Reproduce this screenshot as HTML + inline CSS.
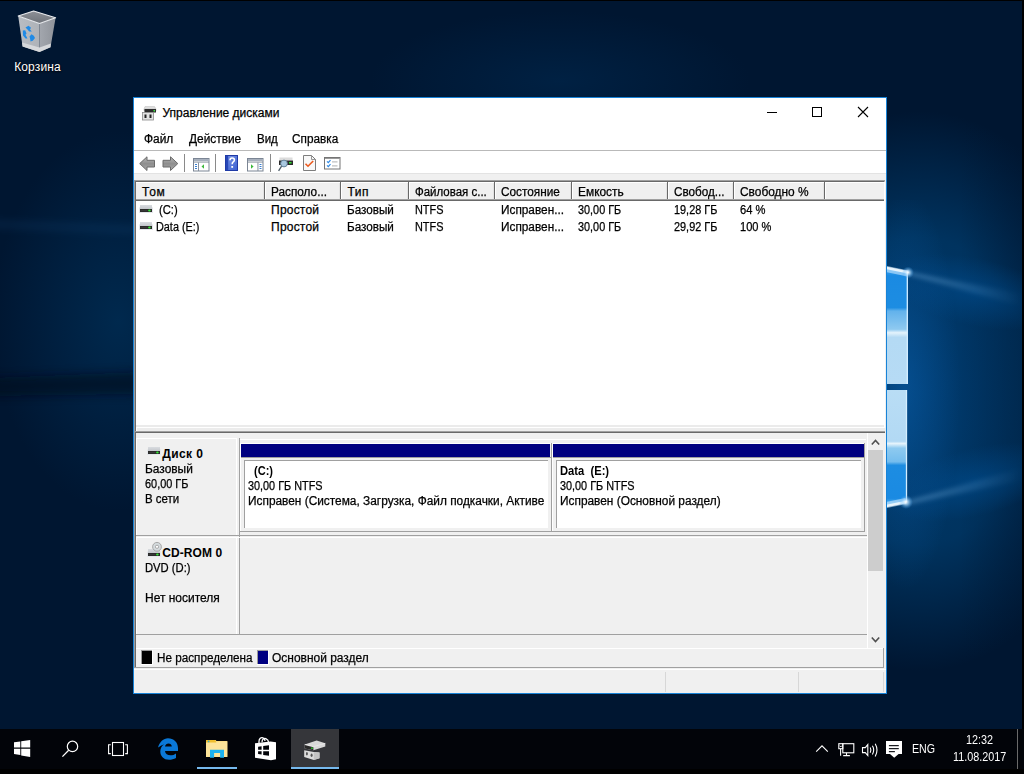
<!DOCTYPE html>
<html><head><meta charset="utf-8">
<style>
*{margin:0;padding:0;box-sizing:border-box}
html,body{width:1024px;height:774px;overflow:hidden;background:#000}
body{position:relative;font-family:"Liberation Sans",sans-serif;font-size:11.5px;color:#000}
.a{position:absolute}
svg.a{overflow:visible}
.t{position:absolute;white-space:nowrap;line-height:16px;font-size:11.5px;-webkit-text-stroke:0.25px currentColor}
#desk{position:absolute;left:0;top:1px;width:1022px;height:728px;overflow:hidden;
 background:
  linear-gradient(90deg, rgba(0,22,49,0) 0px, rgba(0,22,49,0) 960px, rgba(0,22,49,.35) 1022px),
  radial-gradient(ellipse 190px 70px at 560px 80px, rgba(0,34,69,.9), rgba(0,34,69,0) 100%),
  radial-gradient(ellipse 125px 190px at 118px 320px, #00294e 0%, rgba(0,38,74,.6) 50%, rgba(0,34,66,0) 100%),
  radial-gradient(ellipse 200px 280px at 920px 390px, #003a6e 0%, #00335f 55%, rgba(0,40,80,0) 100%),
  #001631;
}
#taskbar{position:absolute;left:0;top:729px;width:1024px;height:45px;background:#020308}
</style></head><body>
<div id="desk"></div>
<svg class="a" style="left:0;top:150px" width="134" height="300" viewBox="0 150 134 300">
 <filter id="bl2" x="-20%" y="-100%" width="140%" height="300%"><feGaussianBlur stdDeviation="5"/></filter>
 <path d="M-10 378L140 372L140 394L-10 396z" fill="#000c1c" opacity=".6" filter="url(#bl2)"/>
 <path d="M-10 222L140 228L140 232L-10 226z" fill="#2a70b0" opacity=".25" filter="url(#bl2)"/>
</svg>
<svg class="a" style="left:860px;top:200px" width="162" height="400" viewBox="860 200 162 400">
 <defs>
  <linearGradient id="p1" x1="0" y1="270" x2="0" y2="384" gradientUnits="userSpaceOnUse">
   <stop offset="0" stop-color="#3aa2f0"/><stop offset=".05" stop-color="#1a8ae2"/><stop offset=".33" stop-color="#1d8de2"/>
   <stop offset=".36" stop-color="#62b2ec"/><stop offset=".52" stop-color="#8ec9f0"/><stop offset=".55" stop-color="#e4f3fc"/><stop offset=".59" stop-color="#b4daf4"/><stop offset="1" stop-color="#b6dbf5"/>
  </linearGradient>
  <linearGradient id="p2" x1="0" y1="390" x2="0" y2="504" gradientUnits="userSpaceOnUse">
   <stop offset="0" stop-color="#b9ddf5"/><stop offset=".45" stop-color="#b2d9f4"/><stop offset=".47" stop-color="#e6f4fc"/><stop offset=".51" stop-color="#8ecaf0"/>
   <stop offset=".63" stop-color="#74bdee"/><stop offset=".66" stop-color="#1d8de2"/><stop offset=".95" stop-color="#1a8ae2"/><stop offset="1" stop-color="#5ab4f2"/>
  </linearGradient>
  <radialGradient id="glow" cx="0" cy="0" r="1" gradientUnits="userSpaceOnUse" gradientTransform="translate(905 390) scale(55 200)">
   <stop offset="0" stop-color="#0a62b0" stop-opacity=".5"/><stop offset="1" stop-color="#0a62b0" stop-opacity="0"/>
  </radialGradient>
  <radialGradient id="spark" cx=".5" cy=".5" r=".5">
   <stop offset="0" stop-color="#fff" stop-opacity="1"/><stop offset=".35" stop-color="#bfe4ff" stop-opacity=".7"/><stop offset="1" stop-color="#3a9ef0" stop-opacity="0"/>
  </radialGradient>
  <linearGradient id="beam" x1="0" y1="0" x2="1" y2="0">
   <stop offset="0" stop-color="#9fd4ff" stop-opacity=".3"/><stop offset="1" stop-color="#9fd4ff" stop-opacity="0"/>
  </linearGradient>
 </defs>
 <rect x="860" y="200" width="162" height="400" fill="url(#glow)"/>
 <radialGradient id="fan1" cx="0" cy="0" r="1" gradientUnits="userSpaceOnUse" gradientTransform="translate(975 292) rotate(12) scale(90 34)">
  <stop offset="0" stop-color="#0056a0" stop-opacity=".45"/><stop offset="1" stop-color="#0056a0" stop-opacity="0"/>
 </radialGradient>
 <radialGradient id="fan2" cx="0" cy="0" r="1" gradientUnits="userSpaceOnUse" gradientTransform="translate(975 482) rotate(-14) scale(90 34)">
  <stop offset="0" stop-color="#0056a0" stop-opacity=".45"/><stop offset="1" stop-color="#0056a0" stop-opacity="0"/>
 </radialGradient>
 <rect x="860" y="200" width="162" height="400" fill="url(#fan1)"/>
 <rect x="860" y="200" width="162" height="400" fill="url(#fan2)"/>
 <filter id="bl" x="-10%" y="-50%" width="120%" height="200%"><feGaussianBlur stdDeviation="2.2"/></filter>
 <path d="M908 271.5L1022 294L1022 306L908 275z" fill="url(#beam)" filter="url(#bl)"/>
 <path d="M906 501L1022 468L1022 480L906 505z" fill="url(#beam)" filter="url(#bl)"/>
 <path d="M860 262L908 272.3V384H860z" fill="url(#p1)"/>
 <path d="M860 390H907V502L860 512z" fill="url(#p2)"/>
 <path d="M860 263.5L908 273.5" stroke="#d8eeff" stroke-width="6" opacity=".55"/>
 <path d="M860 510.5L906 501" stroke="#d8eeff" stroke-width="6" opacity=".55"/>
 <path d="M860 262.5L908 272.3" stroke="#f2faff" stroke-width="2.5" opacity=".9"/>
 <path d="M860 511.5L906 502" stroke="#f2faff" stroke-width="2.5" opacity=".9"/>
 <path d="M907.3 273V384M906.5 390V502" stroke="#d4eeff" stroke-width="1.3"/>
 <circle cx="908" cy="272.5" r="6" fill="url(#spark)"/>
 <circle cx="906" cy="502" r="7" fill="url(#spark)"/>
</svg>
<svg class="a" style="left:0px;top:0px" width="80" height="60" viewBox="0 0 80 60">
 <defs>
  <linearGradient id="rbL" x1="0" y1="0" x2="1" y2="0"><stop offset="0" stop-color="#b9bdc3"/><stop offset="1" stop-color="#aeb2b8"/></linearGradient>
  <linearGradient id="rbR" x1="0" y1="0" x2="1" y2="0"><stop offset="0" stop-color="#a3a7ae"/><stop offset="1" stop-color="#8f939a"/></linearGradient>
  <linearGradient id="rbT" x1="0" y1="0" x2="0" y2="1"><stop offset="0" stop-color="#8d9097"/><stop offset="1" stop-color="#6f737a"/></linearGradient>
 </defs>
 <path d="M18.2 16L39.5 23.4L39.5 52L22.6 46.6z" fill="url(#rbL)"/>
 <path d="M39.5 23.4L55.6 17.8L50.5 47.2L39.5 52z" fill="url(#rbR)"/>
 <path d="M18.2 16L33.6 11L55.6 17.8L39.5 23.4z" fill="url(#rbT)" stroke="#e9ebee" stroke-width="1.1" stroke-linejoin="round"/>
 <path d="M22 42.5L39.5 47.5L50.9 43.5L50.5 47.2L39.5 52L22.6 46.6z" fill="#d6d8db"/>
 <g fill="#1f8ae6">
  <path d="M25.5 27.5L28.5 25.8L31 27.8L30 29.5L31.8 31.6L29.2 31.5L27.5 29.5z"/>
  <path d="M22.8 30.5L25.2 30.2L26.5 33.5L25.5 34.8L27.5 38.5L25.5 38.5L23 35.5z"/>
  <path d="M29.5 36.5L31.5 34.2L33.8 35.8L35 38L32.8 40.8L30.5 41.5L30.2 39z"/>
 </g>
</svg>
<div class="a" style="left:133px;top:97px;width:754px;height:597px;border:1px solid #1883d7;background:#f0f0f0"></div>
<div class="a" style="left:134px;top:98px;width:752px;height:52px;background:#fff;"></div>
<div class="a" style="left:134px;top:150px;width:752px;height:1px;background:#b9b9b9;"></div>
<div class="a" style="left:134px;top:151px;width:752px;height:22px;background:#fff;"></div>
<div class="a" style="left:134px;top:173px;width:752px;height:1px;background:#e3e3e3;"></div>
<div class="a" style="left:767px;top:112px;width:10px;height:1px;background:#000;"></div>
<div class="a" style="left:812px;top:107px;width:10px;height:10px;border:1px solid #000"></div>
<svg class="a" style="left:857px;top:106px" width="12" height="12" viewBox="0 0 12 12"><path d="M1 1L11 11M11 1L1 11" stroke="#000" stroke-width="1.1"/></svg>
<div class="a" style="left:134px;top:180px;width:751px;height:249px;background:#fff;border-left:1px solid #a0a0a0;border-top:1px solid #a0a0a0"></div>
<div class="a" style="left:135px;top:181px;width:750px;height:248px;background:#fff;border-left:1px solid #696969;border-top:1px solid #696969;border-right:1px solid #fff"></div>
<div class="a" style="left:136px;top:182px;width:748px;height:19px;background:#f0f0f0;border-top:1px solid #fff;border-bottom:1px solid #696969"></div>
<div class="a" style="left:263px;top:183px;width:1px;height:16px;background:#e3e3e3;"></div>
<div class="a" style="left:264px;top:182px;width:1px;height:18px;background:#696969;"></div>
<div class="a" style="left:265px;top:182px;width:1px;height:17px;background:#fff;"></div>
<div class="a" style="left:339px;top:183px;width:1px;height:16px;background:#e3e3e3;"></div>
<div class="a" style="left:340px;top:182px;width:1px;height:18px;background:#696969;"></div>
<div class="a" style="left:341px;top:182px;width:1px;height:17px;background:#fff;"></div>
<div class="a" style="left:407px;top:183px;width:1px;height:16px;background:#e3e3e3;"></div>
<div class="a" style="left:408px;top:182px;width:1px;height:18px;background:#696969;"></div>
<div class="a" style="left:409px;top:182px;width:1px;height:17px;background:#fff;"></div>
<div class="a" style="left:493px;top:183px;width:1px;height:16px;background:#e3e3e3;"></div>
<div class="a" style="left:494px;top:182px;width:1px;height:18px;background:#696969;"></div>
<div class="a" style="left:495px;top:182px;width:1px;height:17px;background:#fff;"></div>
<div class="a" style="left:570px;top:183px;width:1px;height:16px;background:#e3e3e3;"></div>
<div class="a" style="left:571px;top:182px;width:1px;height:18px;background:#696969;"></div>
<div class="a" style="left:572px;top:182px;width:1px;height:17px;background:#fff;"></div>
<div class="a" style="left:666px;top:183px;width:1px;height:16px;background:#e3e3e3;"></div>
<div class="a" style="left:667px;top:182px;width:1px;height:18px;background:#696969;"></div>
<div class="a" style="left:668px;top:182px;width:1px;height:17px;background:#fff;"></div>
<div class="a" style="left:732px;top:183px;width:1px;height:16px;background:#e3e3e3;"></div>
<div class="a" style="left:733px;top:182px;width:1px;height:18px;background:#696969;"></div>
<div class="a" style="left:734px;top:182px;width:1px;height:17px;background:#fff;"></div>
<div class="a" style="left:823px;top:183px;width:1px;height:16px;background:#e3e3e3;"></div>
<div class="a" style="left:824px;top:182px;width:1px;height:18px;background:#696969;"></div>
<div class="a" style="left:825px;top:182px;width:1px;height:17px;background:#fff;"></div>
<div class="a" style="left:136px;top:199px;width:748px;height:1px;background:#a0a0a0;"></div>
<div class="a" style="left:136px;top:425px;width:748px;height:2px;background:#ebebeb;"></div>
<div class="a" style="left:136px;top:427px;width:748px;height:1px;background:#fff;"></div>
<div class="a" style="left:136px;top:428px;width:750px;height:3px;background:#ececec;"></div><div class="a" style="left:136px;top:428px;width:1px;height:3px;background:#fff;"></div><div class="a" style="left:134px;top:428px;width:1px;height:4px;background:#a0a0a0;"></div><div class="a" style="left:135px;top:428px;width:1px;height:4px;background:#696969;"></div>
<div class="a" style="left:134px;top:431px;width:751px;height:1px;background:#a0a0a0;"></div>
<div class="a" style="left:135px;top:432px;width:750px;height:1px;background:#696969;"></div>
<div class="a" style="left:135px;top:432px;width:1px;height:236px;background:#696969;"></div>
<div class="a" style="left:134px;top:431px;width:1px;height:237px;background:#a0a0a0;"></div>
<div class="a" style="left:136px;top:433px;width:732px;height:216px;background:#f0f0f0;"></div>
<div class="a" style="left:136px;top:438px;width:101px;height:1px;background:#fff;"></div>
<div class="a" style="left:136px;top:438px;width:1px;height:98px;background:#fff;"></div>
<div class="a" style="left:236px;top:438px;width:1px;height:98px;background:#fff;"></div>
<div class="a" style="left:239px;top:438px;width:1px;height:197px;background:#a0a0a0;"></div>
<div class="a" style="left:240px;top:439px;width:626px;height:1px;background:#fff;"></div>
<div class="a" style="left:240px;top:443px;width:624px;height:1px;background:#fff;"></div>
<div class="a" style="left:240px;top:443px;width:1px;height:89px;background:#fff;"></div>
<div class="a" style="left:241px;top:444px;width:309px;height:13px;background:#000080;"></div>
<div class="a" style="left:553px;top:444px;width:311px;height:13px;background:#000080;"></div>
<div class="a" style="left:241px;top:457px;width:624px;height:1px;background:#a0a0a0;"></div>
<div class="a" style="left:551px;top:443px;width:1px;height:89px;background:#a0a0a0;"></div>
<div class="a" style="left:552px;top:443px;width:1px;height:88px;background:#fff;"></div>
<div class="a" style="left:864px;top:443px;width:1px;height:89px;background:#a0a0a0;"></div>
<div class="a" style="left:244px;top:460px;width:304px;height:68px;background:#fff;border-left:1px solid #a0a0a0;border-top:1px solid #a0a0a0"></div>
<div class="a" style="left:556px;top:460px;width:305px;height:68px;background:#fff;border-left:1px solid #a0a0a0;border-top:1px solid #a0a0a0"></div>
<div class="a" style="left:240px;top:531px;width:625px;height:1px;background:#a0a0a0;"></div>
<div class="a" style="left:136px;top:535px;width:731px;height:1px;background:#a0a0a0;"></div>
<div class="a" style="left:136px;top:537px;width:731px;height:1px;background:#fff;"></div>
<div class="a" style="left:136px;top:537px;width:1px;height:98px;background:#fff;"></div>
<div class="a" style="left:236px;top:537px;width:1px;height:98px;background:#fff;"></div>
<div class="a" style="left:136px;top:634px;width:731px;height:1px;background:#a0a0a0;"></div>
<div class="a" style="left:867px;top:433px;width:1px;height:216px;background:#fff;"></div>
<div class="a" style="left:868px;top:433px;width:16px;height:216px;background:#f0f0f0;"></div>
<div class="a" style="left:868px;top:450px;width:15px;height:121px;background:#cdcdcd;"></div>
<div class="a" style="left:136px;top:648px;width:748px;height:1px;background:#fff;"></div>
<div class="a" style="left:883px;top:648px;width:1px;height:20px;background:#a0a0a0;"></div>
<div class="a" style="left:135px;top:667px;width:749px;height:1px;background:#a0a0a0;"></div>
<div class="a" style="left:134px;top:669px;width:752px;height:1px;background:#fff;"></div>
<div class="a" style="left:665px;top:672px;width:1px;height:20px;background:#d7d7d7;"></div>
<div class="a" style="left:798px;top:672px;width:1px;height:20px;background:#d7d7d7;"></div><div class="a" style="left:883px;top:672px;width:1px;height:20px;background:#d7d7d7;"></div>
<div class="a" style="left:141px;top:650px;width:12px;height:15px;background:#fff"></div><div class="a" style="left:141px;top:650px;width:11px;height:14px;background:#000;border-left:1px solid #9a9a9a;border-top:1px solid #9a9a9a"></div>
<div class="a" style="left:257px;top:650px;width:12px;height:15px;background:#fff"></div><div class="a" style="left:257px;top:650px;width:11px;height:14px;background:#000080;border-left:1px solid #9a9a9a;border-top:1px solid #9a9a9a"></div>
<!-- window icon -->
<svg class="a" style="left:142px;top:105px" width="16" height="16" viewBox="0 0 16 16">
 <defs><linearGradient id="wg1" x1="0" y1="0" x2="0" y2="1"><stop offset="0" stop-color="#e6e6e6"/><stop offset="1" stop-color="#c4c4c4"/></linearGradient></defs>
 <path d="M3 1.5h9.5l1.5 2.5v2H2v-2z" fill="url(#wg1)" stroke="#b8b8b8" stroke-width=".5"/>
 <rect x="2.5" y="4" width="11.5" height="3.5" fill="#2c2c2c"/>
 <rect x="11.5" y="5" width="1.5" height="1.5" fill="#3fe03f"/>
 <rect x="0.5" y="7.5" width="11" height="7.5" fill="#e2e2e2" stroke="#8a8a8a" stroke-width=".8"/>
 <rect x="2.5" y="9.5" width="2" height="3.5" fill="#222"/>
 <rect x="7.5" y="9.5" width="2" height="3.5" fill="#222"/>
</svg>
<!-- toolbar: back / forward -->
<svg class="a" style="left:139px;top:156px" width="17" height="16" viewBox="0 0 17 16">
 <defs><linearGradient id="ag" x1="0" y1="0" x2="0" y2="1"><stop offset="0" stop-color="#b9b9b9"/><stop offset=".5" stop-color="#8e8e8e"/><stop offset="1" stop-color="#a9a9a9"/></linearGradient></defs>
 <path d="M0.7 7.6L8 0.8V4.3H15.5V11H8V14.5z" fill="url(#ag)" stroke="#6a6a6a" stroke-width="1" stroke-linejoin="round"/>
</svg>
<svg class="a" style="left:162px;top:156px" width="17" height="16" viewBox="0 0 17 16">
 <path d="M15.8 7.6L8.5 0.8V4.3H1V11H8.5V14.5z" fill="url(#ag)" stroke="#6a6a6a" stroke-width="1" stroke-linejoin="round"/>
</svg>
<div class="a" style="left:184px;top:154px;width:1px;height:18px;background:#8a8a8a"></div>
<!-- icon3 -->
<svg class="a" style="left:193px;top:158px" width="17" height="14" viewBox="0 0 17 14">
 <rect x=".5" y=".5" width="15.5" height="12.5" fill="#fff" stroke="#7b8594" stroke-width="1"/>
 <rect x="1" y="1" width="15" height="2" fill="#a7b0bd"/>
 <rect x="1" y="3.6" width="15" height=".9" fill="#7b8594"/>
 <rect x="5" y="4.5" width=".9" height="8.5" fill="#7b8594"/>
 <rect x="2" y="6" width="2" height="1" fill="#3a7fd0"/><rect x="2" y="8" width="2" height="1" fill="#3a7fd0"/><rect x="2" y="10" width="2" height="1" fill="#3a7fd0"/>
 <path d="M8.5 8.5L11 6.2V10.8z" fill="#3cb83c"/>
</svg>
<div class="a" style="left:215px;top:154px;width:1px;height:18px;background:#8a8a8a"></div>
<!-- help -->
<svg class="a" style="left:225px;top:155px" width="13" height="16" viewBox="0 0 13 16">
 <defs><linearGradient id="hg" x1="0" y1="0" x2="1" y2="1"><stop offset="0" stop-color="#7b96e6"/><stop offset="1" stop-color="#3a5fd0"/></linearGradient></defs>
 <rect x=".5" y=".5" width="12" height="15" fill="url(#hg)" stroke="#1f3aa6" stroke-width="1"/>
 <rect x="1" y="1" width="2.2" height="14" fill="#2747b8"/>
 <path d="M5 5.2Q5 3 7.2 3Q9.4 3 9.4 5Q9.4 6.3 8 7.2Q7.2 7.8 7.2 9.3" fill="none" stroke="#fff" stroke-width="1.6"/>
 <rect x="6.3" y="11" width="1.8" height="1.8" fill="#fff"/>
</svg>
<!-- icon5 -->
<svg class="a" style="left:247px;top:158px" width="17" height="14" viewBox="0 0 17 14">
 <rect x=".5" y=".5" width="15.5" height="12.5" fill="#fff" stroke="#7b8594" stroke-width="1"/>
 <rect x="1" y="1" width="15" height="2" fill="#a7b0bd"/>
 <rect x="1" y="3.6" width="15" height=".9" fill="#7b8594"/>
 <rect x="10.5" y="4.5" width=".9" height="8.5" fill="#7b8594"/>
 <rect x="12.5" y="6" width="2" height="1" fill="#3a7fd0"/><rect x="12.5" y="8" width="2" height="1" fill="#3a7fd0"/><rect x="12.5" y="10" width="2" height="1" fill="#3a7fd0"/>
 <path d="M4 6.2L6.6 8.5L4 10.8z" fill="#3cb83c"/>
</svg>
<div class="a" style="left:270px;top:154px;width:1px;height:18px;background:#8a8a8a"></div>
<!-- magnifier drive -->
<svg class="a" style="left:278px;top:157px" width="16" height="15" viewBox="0 0 16 15">
 <rect x="1.5" y=".5" width="13" height="3" fill="#dcdcdc"/>
 <rect x="1" y="3.5" width="14" height="4.5" fill="#2a2a2a"/>
 <rect x="11" y="5" width="2.5" height="1.5" fill="#30e030"/>
 <circle cx="6" cy="6.5" r="3.4" fill="#a9c8e0" stroke="#5c7a92" stroke-width=".9"/>
 <path d="M3.6 9.2L0.6 13.8" stroke="#4a5a66" stroke-width="1.3"/>
</svg>
<!-- doc check -->
<svg class="a" style="left:303px;top:155px" width="13" height="16" viewBox="0 0 13 16">
 <path d="M.5 .5H8.5L12.5 4.5V15.5H.5z" fill="#f8f8f8" stroke="#7d7d7d" stroke-width="1"/>
 <path d="M8.5 .5V4.5H12.5" fill="none" stroke="#7d7d7d" stroke-width=".8"/>
 <path d="M2.5 8.7L5 11.2L10.2 6" fill="none" stroke="#ec5a1e" stroke-width="1.6"/>
</svg>
<!-- checklist -->
<svg class="a" style="left:324px;top:157px" width="17" height="13" viewBox="0 0 17 13">
 <rect x=".5" y=".5" width="15.5" height="11.5" fill="#fff" stroke="#757575" stroke-width="1"/>
 <rect x="1" y="1" width="15" height="1" fill="#9a9a9a"/>
 <path d="M3 4.3L4.3 5.6L6.5 3.2M3 8.3L4.3 9.6L6.5 7.2" fill="none" stroke="#2f8ae6" stroke-width="1.2"/>
 <rect x="8" y="4.4" width="5.5" height="1" fill="#b0b0b0"/><rect x="8" y="8.4" width="5.5" height="1" fill="#b0b0b0"/>
</svg>
<!-- scrollbar arrows -->
<svg class="a" style="left:871px;top:438px" width="9" height="8" viewBox="0 0 9 8"><path d="M.8 6.5L4.5 2.5L8.2 6.5" fill="none" stroke="#505050" stroke-width="1.6"/></svg>
<svg class="a" style="left:871px;top:636px" width="9" height="8" viewBox="0 0 9 8"><path d="M.8 1.5L4.5 5.5L8.2 1.5" fill="none" stroke="#505050" stroke-width="1.6"/></svg>
<svg width="0" height="0" style="position:absolute">
 <defs>
  <linearGradient id="drvTop" x1="0" y1="0" x2="0" y2="1"><stop offset="0" stop-color="#d9dce0"/><stop offset="1" stop-color="#c3c6cb"/></linearGradient>
  <g id="drv">
   <rect x="0" y="2.2" width="14" height="5.8" rx=".6" fill="#e4e7eb"/>
   <rect x="1" y="0" width="12" height="4.1" fill="url(#drvTop)"/>
   <rect x="1" y="4" width="12" height="3" fill="#2a2a2a"/>
   <rect x="1.5" y="5" width="7" height=".5" fill="#444"/>
   <ellipse cx="10.4" cy="5.5" rx="1.3" ry="1.1" fill="#35e635"/>
  </g>
 </defs>
</svg>
<svg class="a" style="left:139px;top:205px" width="15" height="9"><use href="#drv"/></svg>
<svg class="a" style="left:139px;top:222px" width="15" height="9"><use href="#drv"/></svg>
<svg class="a" style="left:147px;top:447px" width="15" height="9"><use href="#drv"/></svg>
<svg class="a" style="left:147px;top:538px" width="17" height="20" viewBox="0 0 17 20">
 <g transform="translate(0,11)"><use href="#drv"/></g>
 <circle cx="10" cy="8.8" r="4.4" fill="#d4dadd" stroke="#a8a8a8" stroke-width="1"/>
 <circle cx="10" cy="8.8" r="1.6" fill="#fff" stroke="#9a9a9a" stroke-width=".8"/>
</svg>
<div class="a" style="left:0;top:729px;width:1024px;height:40px;background:#020409"></div>
<div class="a" style="left:0;top:769px;width:1024px;height:5px;background:#000"></div>
<!-- start -->
<svg class="a" style="left:0;top:729px" width="340" height="45" viewBox="0 0 340 45">
 <g fill="#fff">
  <path d="M14 13.3L20.3 12.4V18.6H14z"/>
  <path d="M21.2 12.3L30.2 11V18.6H21.2z"/>
  <path d="M14 19.7H20.3V25.9L14 25z"/>
  <path d="M21.2 19.7H30.2V28L21.2 26.6z"/>
 </g>
 <!-- search -->
 <circle cx="72.5" cy="17.4" r="5.2" fill="none" stroke="#fff" stroke-width="1.2"/>
 <path d="M68.7 21.3L62.4 27.6" stroke="#fff" stroke-width="1.3"/>
 <!-- task view -->
 <rect x="112.5" y="13.5" width="11" height="13" fill="none" stroke="#fff" stroke-width="1.1"/>
 <path d="M110.8 15.8H108.6V24.6H110.8M125.2 15.8H127.4V24.6H125.2" fill="none" stroke="#fff" stroke-width="1.1"/>
 <!-- edge -->
 <g transform="translate(154,6)">
  <path fill="#0a78d7" fill-rule="evenodd" d="M4,12.6C5.5,7 9.5,3.3 14,3.3C19.5,3.3 24,7 24,13.2V15.9H11C11.3,18.8 13.5,20.3 16.5,20.3C18.5,20.3 20.5,19.6 22,18.4V23C20,24.2 17.5,24.8 15,24.8C9.5,24.8 6.3,21 6.3,16.5C6.3,13.5 7.5,11 10,9.4C7.8,10 5.8,11.2 4,12.6Z M11,11.6C11.4,9.6 12.8,8.4 14.5,8.4C16.3,8.4 17.7,9.6 17.8,11.6Z"/>
 </g>
 <!-- explorer -->
 <g transform="translate(202,6)">
  <path d="M4 5H13.5L14.5 6H25.3V21.9H4z" fill="#f9d978"/>
  <rect x="4" y="6.5" width="21.3" height="15.4" fill="#fde49a"/>
  <path d="M4 5H13.2L14.4 7.6H4z" fill="#efbe2e"/>
  <circle cx="6.6" cy="6.4" r=".9" fill="#3cb0c8"/>
  <path d="M8 14.8H22V22.8H18.1V18.1H12.1V22.8H8z" fill="#1cb2ef"/>
 </g>
 <rect x="197" y="38" width="40" height="2" fill="#76b9ed"/>
 <!-- store -->
 <g transform="translate(250,4)">
  <path d="M9 10V8.5C9 5.5 11 4 13 4.8C14.6 5.4 15 6.8 15 8M12 9.2C12 6.2 14 4.8 15.8 5.6C17.6 6.4 18.5 7.8 18.5 9" fill="none" stroke="#fff" stroke-width="1.3"/>
  <path fill="#fff" fill-rule="evenodd" d="M5 10.3L20.5 8.5L26 9.2V26.3L21 27.3L5 24.8Z M8.1 13.7L11.6 13.2V16.7H8.1Z M13.2 12.9L19 12.2V16.7H13.2Z M8.1 18.2H11.6V21.6L8.1 21.1Z M13.2 18.2H19V22.8L13.2 22Z"/>
 </g>
 <!-- active app -->
 <rect x="291" y="0" width="48" height="40" fill="#35363a"/>
 <rect x="291" y="38" width="48" height="2" fill="#76b9ed"/>
 <g transform="translate(300,6)">
  <path d="M4.2 15.2L13.8 17L19.5 17.4V23.2L13.8 25L4.2 22Z" fill="#dcdcdc"/>
  <path d="M13.8 17L19.5 17.4V23.2L13.8 25Z" fill="#c4c4c4"/>
  <ellipse cx="6.9" cy="18.8" rx="1" ry="1.7" fill="#555"/>
  <ellipse cx="11.6" cy="20.3" rx="1" ry="1.7" fill="#555"/>
  <path d="M4.7 9.4L16.6 5.6L25.3 8.3V11.6L13.4 15.2L4.7 13.4Z" fill="#d8d8d8"/>
  <path d="M4.7 9.4L13.4 11.7L25.3 8.3" fill="none" stroke="#f0f0f0" stroke-width=".6"/>
  <path d="M4.7 10L13.4 12.2V15.2L4.7 13.4Z" fill="#2a2a2a"/>
  <rect x="11" y="12.6" width="2" height="1.2" fill="#2fcc2f"/>
 </g>
</svg>
<!-- tray -->
<svg class="a" style="left:800px;top:729px" width="224" height="45" viewBox="0 0 224 45">
 <path d="M16.2 22.6L22 16.8L27.8 22.6" fill="none" stroke="#fff" stroke-width="1.1"/>
 <g fill="none" stroke="#fff" stroke-width="1.1">
  <rect x="42.8" y="14.7" width="11" height="9.1"/>
  <rect x="38.8" y="14.7" width="4" height="5"/>
  <path d="M40.6 19.7V26.8M46.5 23.8V26.6M43.2 26.6H49.9"/>
 </g>
 <path d="M39.8 16.7L40.8 18L41.8 16.7" fill="none" stroke="#fff" stroke-width=".8"/>
 <!-- volume -->
 <g fill="none" stroke="#fff" stroke-width="1.1">
  <path d="M62.5 18.6H65.3L67.8 15.6V26.5L65.3 23.6H62.5z"/>
  <path d="M70.2 18.5Q71.6 21 70.2 23.8"/>
  <path d="M72.4 16.8Q75 21 72.4 25.6"/>
  <path d="M75.2 14.8Q78.8 21 75.2 27.6"/>
 </g>
 <!-- action center -->
 <path d="M86 11.9H102V25H98.6L94.2 28.8L90 25H86z" fill="#fff"/>
 <rect x="88.9" y="16.1" width="9.9" height="1.1" fill="#020409"/>
 <rect x="88.9" y="19.1" width="9.9" height="1.1" fill="#020409"/>
 <rect x="88.9" y="22.1" width="6" height="1.1" fill="#020409"/>
 <rect x="217" y="0" width="1" height="40" fill="#6a6a6a"/>
</svg>
<div class="t" style="left:162.5px;top:104.8px;font-size:12px;color:#000;letter-spacing:0.006px;">Управление дисками</div>
<div class="t" style="left:143.5px;top:130.8px;font-size:12px;color:#000;transform:scaleX(0.9927);transform-origin:0 0;">Файл</div>
<div class="t" style="left:188.5px;top:130.8px;font-size:12px;color:#000;transform:scaleX(0.9893);transform-origin:0 0;">Действие</div>
<div class="t" style="left:256.5px;top:130.8px;font-size:12px;color:#000;transform:scaleX(0.9577);transform-origin:0 0;">Вид</div>
<div class="t" style="left:292.0px;top:130.8px;font-size:12px;color:#000;transform:scaleX(0.9813);transform-origin:0 0;">Справка</div>
<div class="t" style="left:142.0px;top:183.8px;font-size:12px;color:#000;letter-spacing:0.736px;">Том</div>
<div class="t" style="left:271.1px;top:183.8px;font-size:12px;color:#000;transform:scaleX(0.9825);transform-origin:0 0;">Располо...</div>
<div class="t" style="left:347.5px;top:183.8px;font-size:12px;color:#000;letter-spacing:0.492px;">Тип</div>
<div class="t" style="left:415.1px;top:183.8px;font-size:12px;color:#000;transform:scaleX(0.9565);transform-origin:0 0;">Файловая с...</div>
<div class="t" style="left:501.2px;top:183.8px;font-size:12px;color:#000;transform:scaleX(0.9835);transform-origin:0 0;">Состояние</div>
<div class="t" style="left:577.9px;top:183.8px;font-size:12px;color:#000;transform:scaleX(0.9921);transform-origin:0 0;">Емкость</div>
<div class="t" style="left:673.8px;top:183.8px;font-size:12px;color:#000;transform:scaleX(0.9754);transform-origin:0 0;">Свобод...</div>
<div class="t" style="left:739.9px;top:183.8px;font-size:12px;color:#000;transform:scaleX(0.9917);transform-origin:0 0;">Свободно %</div>
<div class="t" style="left:159.2px;top:201.8px;font-size:12px;color:#000;transform:scaleX(0.9350);transform-origin:0 0;">(C:)</div>
<div class="t" style="left:271.1px;top:201.8px;font-size:12px;color:#000;letter-spacing:0.197px;">Простой</div>
<div class="t" style="left:347.3px;top:201.8px;font-size:12px;color:#000;transform:scaleX(0.9736);transform-origin:0 0;">Базовый</div>
<div class="t" style="left:415.1px;top:201.8px;font-size:12px;color:#000;transform:scaleX(0.9061);transform-origin:0 0;">NTFS</div>
<div class="t" style="left:501.2px;top:201.8px;font-size:12px;color:#000;transform:scaleX(0.9841);transform-origin:0 0;">Исправен...</div>
<div class="t" style="left:577.9px;top:201.8px;font-size:12px;color:#000;transform:scaleX(0.9047);transform-origin:0 0;">30,00 ГБ</div>
<div class="t" style="left:673.8px;top:201.8px;font-size:12px;color:#000;transform:scaleX(0.9068);transform-origin:0 0;">19,28 ГБ</div>
<div class="t" style="left:739.9px;top:201.8px;font-size:12px;color:#000;transform:scaleX(0.9320);transform-origin:0 0;">64 %</div>
<div class="t" style="left:156.4px;top:218.8px;font-size:12px;color:#000;transform:scaleX(0.9039);transform-origin:0 0;">Data (E:)</div>
<div class="t" style="left:271.1px;top:218.8px;font-size:12px;color:#000;letter-spacing:0.197px;">Простой</div>
<div class="t" style="left:347.3px;top:218.8px;font-size:12px;color:#000;transform:scaleX(0.9736);transform-origin:0 0;">Базовый</div>
<div class="t" style="left:415.1px;top:218.8px;font-size:12px;color:#000;transform:scaleX(0.9061);transform-origin:0 0;">NTFS</div>
<div class="t" style="left:501.2px;top:218.8px;font-size:12px;color:#000;transform:scaleX(0.9841);transform-origin:0 0;">Исправен...</div>
<div class="t" style="left:577.9px;top:218.8px;font-size:12px;color:#000;transform:scaleX(0.9047);transform-origin:0 0;">30,00 ГБ</div>
<div class="t" style="left:673.8px;top:218.8px;font-size:12px;color:#000;transform:scaleX(0.9068);transform-origin:0 0;">29,92 ГБ</div>
<div class="t" style="left:739.9px;top:218.8px;font-size:12px;color:#000;transform:scaleX(0.9227);transform-origin:0 0;">100 %</div>
<div class="t" style="left:162.3px;top:445.8px;font-size:12px;color:#000;font-weight:bold;-webkit-text-stroke:0;letter-spacing:0.395px;">Диск 0</div>
<div class="t" style="left:144.7px;top:460.8px;font-size:12px;color:#000;transform:scaleX(0.9923);transform-origin:0 0;">Базовый</div>
<div class="t" style="left:144.7px;top:475.8px;font-size:12px;color:#000;transform:scaleX(0.9089);transform-origin:0 0;">60,00 ГБ</div>
<div class="t" style="left:144.7px;top:490.8px;font-size:12px;color:#000;transform:scaleX(0.9550);transform-origin:0 0;">В сети</div>
<div class="t" style="left:253.5px;top:462.8px;font-size:12px;color:#000;font-weight:bold;-webkit-text-stroke:0;transform:scaleX(0.9198);transform-origin:0 0;">(C:)</div>
<div class="t" style="left:247.9px;top:478.3px;font-size:12px;color:#000;transform:scaleX(0.9041);transform-origin:0 0;">30,00 ГБ NTFS</div>
<div class="t" style="left:247.9px;top:493.3px;font-size:12px;color:#000;transform:scaleX(0.9891);transform-origin:0 0;">Исправен (Система, Загрузка, Файл подкачки, Активе</div>
<div class="t" style="left:560.1px;top:462.8px;font-size:12px;color:#000;font-weight:bold;-webkit-text-stroke:0;transform:scaleX(0.9322);transform-origin:0 0;">Data&nbsp; (E:)</div>
<div class="t" style="left:560.1px;top:478.3px;font-size:12px;color:#000;transform:scaleX(0.9041);transform-origin:0 0;">30,00 ГБ NTFS</div>
<div class="t" style="left:560.1px;top:493.3px;font-size:12px;color:#000;transform:scaleX(0.9888);transform-origin:0 0;">Исправен (Основной раздел)</div>
<div class="t" style="left:162.3px;top:545.3px;font-size:12px;color:#000;font-weight:bold;-webkit-text-stroke:0;letter-spacing:0.079px;">CD-ROM 0</div>
<div class="t" style="left:144.7px;top:559.8px;font-size:12px;color:#000;transform:scaleX(0.9369);transform-origin:0 0;">DVD (D:)</div>
<div class="t" style="left:144.7px;top:590.3px;font-size:12px;color:#000;transform:scaleX(0.9984);transform-origin:0 0;">Нет носителя</div>
<div class="t" style="left:156.8px;top:650.3px;font-size:12px;color:#000;transform:scaleX(0.9759);transform-origin:0 0;">Не распределена</div>
<div class="t" style="left:272.3px;top:650.3px;font-size:12px;color:#000;transform:scaleX(0.9971);transform-origin:0 0;">Основной раздел</div>
<div class="t" style="left:14.2px;top:58.7px;font-size:12px;color:#fff;-webkit-text-stroke:0;letter-spacing:0.130px;text-shadow:0 1px 2px rgba(0,0,0,.9),0 0 1px rgba(0,0,0,.8);">Корзина</div>
<div class="t" style="left:912.0px;top:740.6px;font-size:12px;color:#fff;-webkit-text-stroke:0;transform:scaleX(0.8879);transform-origin:0 0;">ENG</div>
<div class="t" style="left:966.1px;top:731.8px;font-size:12px;color:#fff;-webkit-text-stroke:0;transform:scaleX(0.9024);transform-origin:0 0;">12:32</div>
<div class="t" style="left:952.7px;top:748.8px;font-size:12px;color:#fff;-webkit-text-stroke:0;transform:scaleX(0.9008);transform-origin:0 0;">11.08.2017</div>
</body></html>
